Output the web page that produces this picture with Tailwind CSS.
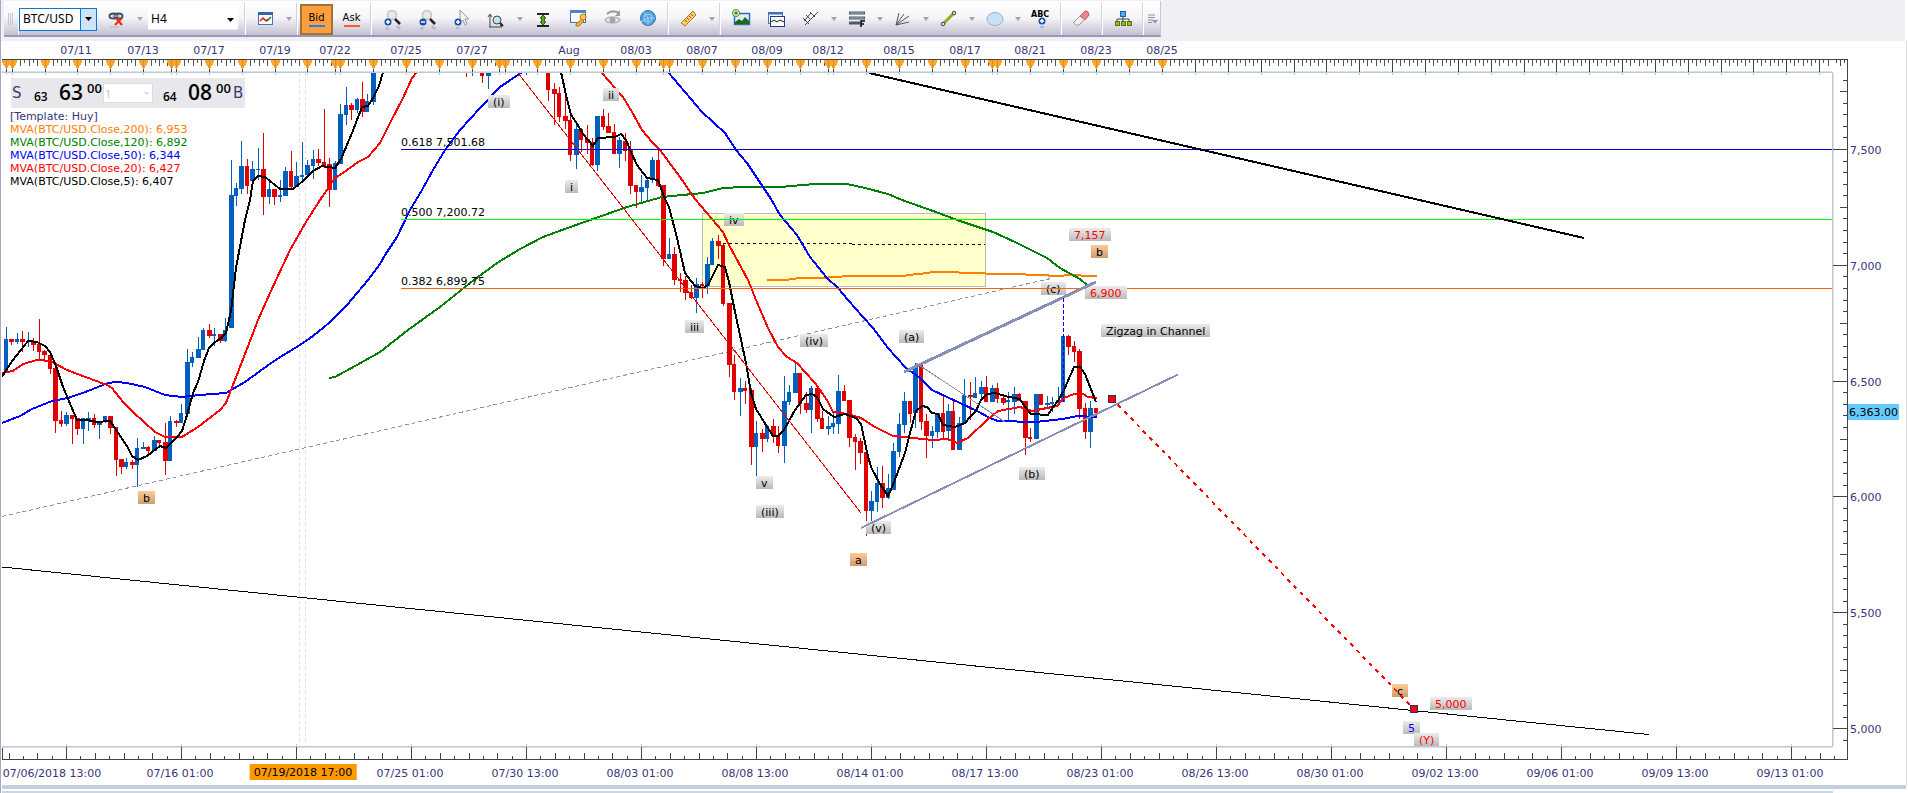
<!DOCTYPE html>
<html lang="en">
<head>
    <meta charset="UTF-8">
    <meta name="viewport" content="width=device-width, initial-scale=1.0">
    <title>BTC/USD H4</title>
    <script src="https://cdn.jsdelivr.net/npm/@tailwindcss/browser@4"></script>
</head>
<body class="h-screen min-h-[400px] flex flex-col overflow-hidden bg-white border-l border-[#a9a7c2] font-['DejaVu_Sans',Verdana,sans-serif] text-[11px] text-[#35357a]">

    <!-- Toolbar -->
    <header class="h-[41px] shrink-0 bg-[#f0eff4] pl-[3px] pt-px mr-[3px]">
        <div id="toolbar" class="w-max h-9 pt-[2px] flex items-center bg-linear-to-b from-white via-[#f5f4f8] to-[#c3c1d2] border-b-2 border-r border-b-[#9a98b2] border-r-[#c9c8d6]">
            <div class="flex gap-px w-[15px] h-full items-center border-r border-white pl-1">
                <i class="w-px h-3 bg-[#c8c8d2]"></i><i class="w-px h-3 bg-[#c8c8d2]"></i><i class="w-px h-3 bg-[#c8c8d2]"></i>
            </div>
            <div class="relative w-[78px] h-[23px]">
                <select aria-label="Symbol" class="appearance-none w-full h-full bg-white border border-[#0a78d7] pl-[3px] text-[12px] leading-none text-black font-['Noto_Sans',sans-serif]"><option>BTC/USD</option></select>
                <span class="absolute right-px top-px bottom-px w-4 bg-[#cce4f7] border-l border-[#0a78d7] flex items-center justify-center pointer-events-none"><svg width="7" height="4"><path d="M0 0h7L3.500 4z" fill="#000"/></svg></span>
            </div>
            <button aria-label="Unlink" class="w-[35px] h-8 ml-[2px] pt-[2px] flex justify-center items-center">
                <svg width="18" height="20" viewBox="0 0 18 20" fill="none"><ellipse cx="5.500" cy="6" rx="4" ry="2.500" stroke="#3a4d63" stroke-width="2"/><ellipse cx="10.500" cy="6" rx="4" ry="2.500" stroke="#3a4d63" stroke-width="2"/><path d="M4 6h8" stroke="#9fb4c8"/><path d="M8 8l6 7M14 8l-7 7" stroke="#f02a10" stroke-width="2"/><path d="M2 17h9" stroke="#c4c6d2" stroke-width="2"/></svg>
            </button>
            <button aria-label="Link options" class="w-[11px] h-8 flex justify-center items-center"><svg width="6" height="4"><path d="M0 0h6L3 4z" fill="#a9a8b8"/></svg></button>
            <div class="relative w-[90px] h-[22px] ml-[3px] mr-1">
                <select aria-label="Period" class="appearance-none w-full h-full bg-white border-b border-[#e6e6ee] pl-[3px] text-[12px] leading-none text-black font-['Noto_Sans',sans-serif]"><option>H4</option></select>
                <svg class="absolute right-1 top-[10px] pointer-events-none" width="7" height="4"><path d="M0 0h7L3.500 4z" fill="#000"/></svg>
            </div>
        </div>
    </header>

    <!-- Chart -->
    <main class="flex-1 min-h-0 ml-px mr-px border-r border-[#dddce6] grid grid-cols-[1fr_74px] grid-rows-[32px_1fr_39px]">
        <div class="relative overflow-hidden">
            <svg class="absolute inset-0 w-full h-full" viewBox="2 41 1830 32" preserveAspectRatio="none" shape-rendering="crispEdges">
                <path d="M2 71.500H1832" stroke="#d9e0e8"/><path d="M2 72.500H1832" stroke="#bccad6"/>
                <g id="topTicks"></g>
                <path d="M2 59.500H1832" stroke="#444"/>
            </svg>
            <div id="topLabels"></div>
        </div>
        <svg class="w-full h-full" viewBox="1832 41 74 32" preserveAspectRatio="none" shape-rendering="crispEdges">
            <path d="M1832 59.500H1848M1836.500 60v3M1840.500 60v6M1844.500 60v3M1847.500 59v14" stroke="#444"/><path d="M1832 72.500h1" stroke="#bccad6"/>
        </svg>

        <div class="relative overflow-hidden">
            <svg id="plot" class="absolute inset-0 w-full h-full" viewBox="2 73 1830 673" preserveAspectRatio="none" shape-rendering="crispEdges" fill="none">
                <rect x="702.500" y="213.500" width="283" height="73" fill="#ffffcc" stroke="#bdbdbd"/>
                <path d="M299.500 73V746M305.500 73V746" stroke="#dedede" stroke-dasharray="3 3"/>
                <g id="gridMarks"></g>
                <path d="M2 516.500L1053 278" stroke="#8890b8" stroke-dasharray="4 3"/>
                <g id="candles"></g>
                <path d="M723 243.500H852M852 244.500H985" stroke="#000" stroke-dasharray="3 3"/>
                <!-- moving averages: 200, 120, 50, 20, 5 -->
                <g stroke-width="2">
                    <path stroke="#ff8000" d="M767 280L785 280 800 278 820 278 837 277 847 276 905 276 907 275 920 274 933 272 958 272 960 273 985 273 987 274 1025 274 1027 275 1047 275 1050 276 1063 276 1065 275 1080 275 1082 276 1097 276"/>
                    <path stroke="#008000" d="M329 378L335 377 357 365 380 352 408 330 440 307 470 283 497 263 520 249 543 237 562 230 593 219 627 207 662 197 703 193 723 188 743 187 780 187 815 184 847 184 865 188 888 194 902 200 933 211 960 221 993 232 1015 242 1047 258 1060 268 1080 279 1087 285"/>
                    <path stroke="#0000ff" d="M2 423L20 416 32 409 52 401 68 398 88 391 108 383 117 382 127 383 145 387 165 395 182 397 200 395 226 393 245 382 267 366 277 359 300 345 313 336 329 323 347 305 368 280 380 264 385 255 397 237 410 210 422 190 433 170 445 150 460 130 480 108 500 87 509 81 522 72"/>
                    <path stroke="#0000ff" d="M668 72L702 112 725 133 736 150 747 163 771 199 780 215 797 235 810 257 827 278 838 288 848 300 863 317 873 328 888 348 905 367 920 378 932 390 947 397 960 403 977 411 990 418 998 421 1035 422 1063 419 1077 416 1097 417"/>
                    <path stroke="#ff0000" d="M2 373L13 371 23 364 37 360 50 361 67 370 107 385 112 388 123 402 133 412 155 432 165 437 182 437 198 427 220 410 226 403 231 390 240 367 258 320 270 293 290 250 306 222 320 200 335 178 343 173 358 162 368 157 380 143 390 123 403 98 412 78 417 72"/>
                    <path stroke="#ff0000" d="M601 72L623 97 632 112 642 130 652 142 660 150 680 177 695 199 723 232 729 245 748 280 756 300 768 328 778 347 787 357 797 363 815 383 827 400 833 412 848 414 861 418 875 427 893 436 913 438 933 440 947 439 957 443 968 438 987 420 998 411 1020 407 1032 411 1057 406 1064 398 1074 394 1083 394 1088 397 1097 398"/>
                    <path stroke="#000" d="M2 377L6 370 13 360 28 341 37 342 45 346 50 352 56 366 63 387 77 420 87 420 97 422 110 421 127 446 132 456 138 460 147 456 160 446 166 448 177 437 182 431 187 415 193 393 198 382 204 361 209 348 215 342 220 339 226 333 231 311 236 268 245 220 250 200 253 181 258 176 265 177 280 189 293 189 303 181 313 171 322 166 335 168 341 159 352 133 362 107 368 106 373 98 379 86 383 72"/>
                    <path stroke="#000" d="M561 72L566 95 571 115 576 122 583 134 593 146 598 138 615 137 621 134 626 140 631 152 637 165 647 178 658 180 665 199 669 207 677 238 685 273 695 286 703 288 708 285 718 265 725 267 729 282 735 312 746 363 751 393 756 409 766 425 773 436 778 436 784 430 795 410 806 395 812 394 817 397 823 409 834 417 845 414 856 418 861 424 867 452 871 467 880 484 888 496 893 485 905 453 910 433 916 411 922 406 927 407 932 413 938 414 943 425 955 427 965 423 970 417 976 411 981 400 987 394 995 393 1009 397 1020 399 1025 407 1031 414 1048 415 1053 407 1058 401 1064 390 1074 367 1080 367 1085 374 1096 402"/>
                </g>
            </svg>
            <div id="notes"></div>
            <svg class="absolute inset-0 w-full h-full pointer-events-none" viewBox="2 73 1830 673" preserveAspectRatio="none" shape-rendering="crispEdges" fill="none">
                <path d="M401 149.500H1832" stroke="#0000d8"/>
                <path d="M401 219.500H1832" stroke="#00ff00"/>
                <path d="M401 288.500H1084M1127 288.500H1832" stroke="#ff6600"/>
                <path d="M518 73L861 513" stroke="#e80000"/>
                <path d="M869 73L1584 238" stroke="#000" stroke-width="2"/>
                <path d="M2 567L1649 734.500" stroke="#000"/>
                <path d="M916 363L1005 422" stroke="#8890b8"/>
                <path d="M904 372L1096 282" stroke="#8890b8" stroke-width="3"/>
                <path d="M861 528L1178 374.500" stroke="#8890b8" stroke-width="2"/>
                <path d="M1063.500 298V402" stroke="#0000ff" stroke-dasharray="4 2"/>
                <path d="M1118 405L1414 709" stroke="#ff0000" stroke-width="2" stroke-dasharray="4 5"/>
                <rect x="1108.500" y="395.500" width="7" height="7" fill="#ff0000" stroke="#2f2f6b"/>
                <rect x="1410.500" y="705.500" width="7" height="7" fill="#ff0000" stroke="#2f2f6b"/>
            </svg>

            <!-- Quote box and indicator legend -->
            <div class="absolute left-[9px] top-[5px] w-[234px] h-[30px] flex items-center bg-[#e8e8ec] text-black font-['Open_Sans','Noto_Sans',sans-serif] font-semibold">
                <span class="w-[23px] pl-px text-[15px] font-normal text-[#3b3b78] font-['DejaVu_Sans',sans-serif]">S</span>
                <span class="w-[25px] text-[12px] pt-2">63</span>
                <span class="w-7 text-[21px]">63</span>
                <span class="w-[15px] text-[13px] pb-2">00</span>
                <span class="relative ml-px w-[50px] h-[20px]">
                    <select aria-label="Amount" class="appearance-none w-full h-full bg-white border border-[#dcdcdc] pl-px text-[11px] leading-none font-normal text-[#c4c4b8]"><option>1</option></select>
                    <svg class="absolute right-1 top-[9px] pointer-events-none" width="5" height="3"><path d="M0 0h5L2.500 3z" fill="#d6d6d6"/></svg>
                </span>
                <span class="w-[25px] ml-[10px] text-[12px] pt-2">64</span>
                <span class="w-7 text-[21px]">08</span>
                <span class="w-[17px] text-[13px] pb-2">00</span>
                <span class="text-[15px] font-normal text-[#3b3b78] font-['DejaVu_Sans',sans-serif]">B</span>
            </div>
            <div class="absolute left-2 top-[37px] leading-[13px] whitespace-nowrap">
                <p>[Template: Huy]</p>
                <p class="text-[#ff8000]">MVA(BTC/USD.Close,200): 6,953</p>
                <p class="text-[#008000]">MVA(BTC/USD.Close,120): 6,892</p>
                <p class="text-[#0000ff]">MVA(BTC/USD.Close,50): 6,344</p>
                <p class="text-[#ff0000]">MVA(BTC/USD.Close,20): 6,427</p>
                <p class="text-black">MVA(BTC/USD.Close,5): 6,407</p>
            </div>
        </div>

        <!-- Price axis -->
        <div class="relative">
            <svg class="absolute inset-0 w-full h-full" viewBox="1832 73 74 673" preserveAspectRatio="none" shape-rendering="crispEdges">
                <path d="M1832.500 73V746" stroke="#bccad6"/><path d="M1833.500 73V746" stroke="#d9e0e8"/>
                <g id="priceTicks"></g>
                <path d="M1847.500 73V746" stroke="#444"/>
            </svg>
            <div id="priceLabels"></div>
        </div>

        <!-- Time axis -->
        <div class="relative overflow-hidden">
            <svg class="absolute inset-0 w-full h-full" viewBox="2 746 1830 39" preserveAspectRatio="none" shape-rendering="crispEdges">
                <path d="M2 746.500H1832" stroke="#bccad6"/><path d="M2 747.500H1832" stroke="#d9e0e8"/>
                <g id="timeTicks"></g>
                <path d="M2 759.500H1832" stroke="#444"/>
            </svg>
            <div id="timeLabels"></div>
        </div>
        <svg class="w-full h-full" viewBox="1832 746 74 39" preserveAspectRatio="none" shape-rendering="crispEdges">
            <path d="M1832 759.500h16M1847.500 746v14M1834.500 756v3" stroke="#444"/><path d="M1832 746.500h1" stroke="#bccad6"/>
        </svg>
    </main>

    <footer class="h-2 shrink-0 ml-px mr-[2px]">
        <div class="h-1 bg-[#c3cfde]"></div>
        <div class="h-4 mt-[2px] mr-[73px] border-t-2 border-[#cdd6e0]"></div>
    </footer>

    <script>
        const PLOT = { x: 2, y: 73, w: 1830, h: 673 };
        const $ = id => document.getElementById(id);
        const pctX = x => ((x - PLOT.x) / PLOT.w * 100) + '%';
        const pctY = y => ((y - PLOT.y) / PLOT.h * 100) + '%';

        // ---- toolbar ----
        const blob = (x, y) => `<circle cx="${x}" cy="${y}" r="3.500" fill="#1452a8"/><path d="M${x - 2} ${y}h4" stroke="#fff" stroke-width="1.500"/>`;
        const plus = (x, y) => blob(x, y) + `<path d="M${x} ${y - 2}v4" stroke="#fff" stroke-width="1.500"/>`;
        const lens = '<circle cx="11" cy="6" r="4.500" fill="#e9e9ec" stroke="#c2c2c6" stroke-width="1.500"/><path d="M14 10l5 5" stroke="#222" stroke-width="2.500"/><path d="M6 18v3M16 17l3 3" stroke="#b9b8cc" stroke-width="3"/>';
        const ICONS = {
            chart: '<rect x="3.500" y="3.500" width="14" height="12" fill="#fff" stroke="#4a72b0"/><path d="M3 4.500h15" stroke="#3465b0" stroke-width="3"/><path d="M5 12l3-3 3 3 2-2" stroke="#e01010" stroke-width="1.500"/><path d="M12 12l4-4" stroke="#108010" stroke-width="1.500"/><path d="M4 19h13" stroke="#d0cfdd" stroke-width="2"/>',
            zoomIn: lens + plus(7, 13),
            zoomOut: lens + blob(7, 13),
            pointer: '<path d="M9 1v13l3-3 2 5 2-1-2-5h4z" fill="#f2f2f2" stroke="#999"/>' + plus(7, 13) + '<path d="M5 19h4" stroke="#b9b8cc" stroke-width="2"/>',
            area: '<path d="M4 6v12M2 8l2-3 2 3M3 18h13l-2-2" stroke="#444"/><circle cx="11" cy="11" r="4" fill="#bfe6f7" stroke="#444"/><path d="M14 14l3 3" stroke="#222" stroke-width="2"/>',
            fit: '<path d="M5 5h12M5 17h12" stroke="#222" stroke-width="2"/><path d="M11 6l3 3h-1.500v4H14l-3 3-3-3h1.500V9H8z" fill="#5aa22c" stroke="#2c6410"/>',
            options: '<rect x="3.500" y="1.500" width="15" height="12" fill="#fff" stroke="#3f72bd"/><path d="M3 2.500h16" stroke="#4f83cc" stroke-width="3"/><path d="M15 10l-6 5v2h3l5-5z" fill="#f0b030" stroke="#b87818"/><circle cx="16" cy="8" r="3" fill="#ffc850" stroke="#b87818"/>',
            eye: '<path d="M3 11c3-4 12-4 15 0-3 4-12 4-15 0z" stroke="#b4b4bc" stroke-width="1.500"/><circle cx="10.500" cy="11" r="3" fill="#a4a4ac"/><path d="M5 5c4-4 8-3 12-1" stroke="#9a9aa2" stroke-width="2"/><path d="M18 1v6h-5z" fill="#9a9aa2"/>',
            radar: '<circle cx="11" cy="9" r="7.500" fill="#4fa2dc" stroke="#2f77b4"/><path d="M11 9L6 2M11 9h7M11 9v7M11 9L4 13" stroke="#a9d4f2"/><circle cx="11" cy="9" r="4" stroke="#a9d4f2"/>',
            ruler: '<path d="M3 14L15 2l3 4L7 17z" fill="#f8cf70" stroke="#b07818"/><path d="M7 11l2 2M9 9l2 2M11 7l2 2M13 5l2 2" stroke="#8a5a10"/>',
            image: '<rect x="4.500" y="4.500" width="15" height="11" fill="#dff0fc" stroke="#2f6cc0" stroke-width="1.500"/><path d="M5 15v-2l4-3 3 2 3-4 4 4v3z" fill="#1c6a14"/><circle cx="6" cy="4" r="3.500" fill="#e4f4cc" stroke="#4c8a1c"/><path d="M4 4h4M6 2v4" stroke="#2c6a0c"/>',
            windows: '<rect x="3.500" y="3.500" width="14" height="11" fill="#fff" stroke="#3f72bd"/><path d="M3 4.500h15" stroke="#3f72bd" stroke-width="2"/><rect x="5.500" y="7.500" width="14" height="10" fill="#fff" stroke="#20407a"/><path d="M6 13l3-2 3 2 3-2 4 2" stroke="#222"/>',
            fork: '<path d="M5 16L18 3M6 6l5 5M10 3l5 5M3 9l6 6M4 12l7-8" stroke="#444"/>',
            fib: '<path d="M3 4h16M3 9h16M3 14h11" stroke="#4e5a66" stroke-width="3"/><path d="M4 4h14M4 9h14" stroke="#a9b4be"/><path d="M15 18v-6h4M15 15h3" stroke="#000" stroke-width="1.500"/>',
            fan: '<path d="M4 16L7 4M4 16l8-11M4 16l13-9M4 16l13-3" stroke="#555"/>',
            line: '<path d="M5 15L16 4" stroke="#86b414" stroke-width="3"/><circle cx="5" cy="15" r="1.800" fill="#d8e8a0" stroke="#445"/><circle cx="16" cy="4" r="1.800" fill="#d8e8a0" stroke="#445"/>',
            ellipse: '<ellipse cx="11" cy="10" rx="8" ry="6.500" fill="#c9e0f5" stroke="#8fb2d6"/>',
            text: '<text x="1" y="8" font-size="8" font-weight="bold" fill="#000">ABC</text>' + plus(12, 12) + '<path d="M10 18h4" stroke="#a8b8e0" stroke-width="2"/>',
            eraser: '<path d="M3 13L14 2q4 0 4 4L8 16q-5 1-5-3z" fill="#f0f0f0" stroke="#999"/><path d="M9 7l5-5q4 0 4 4l-4 5z" fill="#ea8590" stroke="#c8606c"/>',
            tree: '<path d="M11 7v6M5 13v-3h12v3" stroke="#444"/><rect x="8.500" y="2.500" width="5" height="5" fill="#58a8f0" stroke="#1c60b0"/><g fill="#94bc1c" stroke="#567808"><rect x="3.500" y="12.500" width="4" height="4"/><rect x="9.500" y="12.500" width="4" height="4"/><rect x="15.500" y="12.500" width="4" height="4"/></g>'
        };
        const icon = (name, label) => `<button aria-label="${label}" class="w-[35px] h-8 pt-[2px] flex justify-center items-center"><svg width="22" height="22" viewBox="0 0 22 22" fill="none">${ICONS[name]}</svg></button>`;
        const arrow = '<button aria-label="More" class="w-[11px] h-8 flex justify-center items-center"><svg width="6" height="4"><path d="M0 0h6L3 4z" fill="#a3a2b4"/></svg></button>';
        const sep = '<i class="w-1.5 h-8 flex justify-center"><i class="w-[2px] h-full bg-[#d3d2de] border-r border-white"></i></i>';
        $('toolbar').insertAdjacentHTML('beforeend', [
            sep, icon('chart', 'Chart type'), arrow, sep,
            '<button class="w-[33px] h-[31px] bg-[#ff9f3c] border-2 border-[#9c7434] text-black text-[10px] leading-[12px]">Bid<i class="block mx-auto mt-px w-4 h-[2px] bg-[#1c80ff]"></i></button>',
            '<button class="w-[33px] h-[31px] ml-[2px] text-black text-[10px] leading-[12px]">Ask<i class="block mx-auto mt-px w-4 h-[2px] bg-[#ff5a28]"></i></button>',
            sep, icon('zoomIn', 'Zoom in'), icon('zoomOut', 'Zoom out'), icon('pointer', 'Pointer'), icon('area', 'Zoom area'), arrow,
            icon('fit', 'Fit'), icon('options', 'Options'), icon('eye', 'Show'), icon('radar', 'Radar'),
            sep, icon('ruler', 'Ruler'), arrow,
            sep, icon('image', 'Add image'), icon('windows', 'Windows'), icon('fork', 'Pitchfork'), arrow, icon('fib', 'Fibonacci'), arrow,
            icon('fan', 'Fan'), arrow, icon('line', 'Line'), arrow, icon('ellipse', 'Ellipse'), arrow, icon('text', 'Text'),
            sep, icon('eraser', 'Eraser'), sep, icon('tree', 'Objects'), sep,
            '<button aria-label="Toolbar options" class="w-[14px] h-8 flex justify-center items-center"><svg width="10" height="10" viewBox="0 0 10 10"><path d="M0 1h7M0 3.500h7M0 6h5M0 8.500h4" stroke="#8f8ea4"/><path d="M4 6h6L7 9.500z" fill="#8f8ea4"/></svg></button>'
        ].join(''));

        // ---- candles: colour, high, top of body, bottom of body, low ----
        const BARS = {
            0: `B327,339,372,372 R339,339,342,345 B333,339,342,344 R331,339,342,352 B332,341,342,347 R338,342,345,351 R319,344,352,360 R350,351,355,360 R352,355,369,374 R368,368,421,433
                R411,420,424,427 B412,415,424,426 R415,415,419,444 R418,418,429,435 B418,418,429,444 B412,418,420,431 R414,418,425,428 B421,422,425,439 B416,416,422,423 R416,416,428,434
                R427,427,460,476 R459,459,467,474 B458,462,467,469 R460,462,465,469 B438,448,465,487 B442,447,449,449 R446,447,451,454 B436,440,451,451 R440,440,443,448 R423,442,461,475
                B416,421,461,461 R420,421,423,427 B404,413,423,423 B349,362,414,414 B352,357,363,367 B337,349,358,358 B328,330,350,350 R324,330,336,338 B328,334,336,346 R334,334,341,343
                B318,330,341,342 B160,195,328,328 B183,188,196,206 B141,166,189,194 R159,166,186,194 B161,169,181,190 B148,169,170,180 R133,169,197,215 B180,189,197,204 R189,189,197,205
                B180,195,197,202 B167,171,196,196 R151,171,187,188 B162,176,187,187 B142,175,177,181 B160,165,175,176 B150,159,166,179 R149,159,163,166 R109,162,166,168 R158,164,190,207
                B161,163,190,190 B104,114,164,164 B87,105,115,125 R103,105,110,120 B98,99,110,113 R82,99,112,117 B94,101,112,112 B60,60,102,105`,
            84: 'R60,60,61,77 B60,60,61,76',
            87: 'R60,60,76,83 B60,60,76,89',
            95: 'B60,60,61,75',
            99: `R60,60,90,101 R83,89,94,125 R87,93,117,122 R96,116,121,129 R115,120,155,161 B122,129,155,169 R128,129,140,152 R125,139,143,154 R138,142,165,166 B116,116,165,171
                R109,116,127,130 R113,126,133,133 R124,132,154,154 B137,140,154,168 R133,141,151,161 R141,149,186,194 R185,185,192,208 B175,187,192,202 B178,180,188,202 B157,160,180,183
                R149,160,186,187 R185,185,259,266 B238,254,259,259 R247,254,280,285 R273,279,281,292 R276,280,293,300 R285,292,298,299 B278,284,298,313 R282,284,286,298 B257,264,286,294
                B238,241,265,265 R235,241,246,259 R244,245,304,306 R303,303,365,377 R355,364,392,400 B378,388,392,416 R381,388,391,404 R388,390,447,465 B421,433,447,476 R429,433,439,452
                B425,426,439,442 R419,426,436,443 R426,435,446,453 B376,401,446,463 B385,392,402,405 B362,373,393,393 R373,373,404,414 R392,403,410,413 B386,388,410,433 R388,388,419,422
                R411,418,429,429 B416,426,429,435 B413,423,427,434 B375,391,424,434 R385,391,401,401 R400,400,438,447 R434,437,442,470 R438,441,453,464 R452,452,511,536 B491,501,511,521
                B467,483,502,512 R466,483,498,508 B474,488,498,499 B443,451,490,490 B413,424,452,457 B392,401,425,433 R401,401,414,423 B363,366,413,428 R364,365,422,430 R414,421,436,458
                B426,431,436,448 B413,413,432,438 R396,413,432,440 B404,411,431,440 R400,411,450,450 B417,423,450,450 B379,395,424,424 R382,395,397,420 B377,393,398,398 B381,387,394,399
                R376,387,402,402 B385,388,402,402 R383,388,399,403 R396,398,403,405 B392,400,402,420 B387,394,402,414 R393,394,401,401 R401,401,438,455 R428,437,439,442 B394,394,439,439
                R394,394,405,405 B396,403,405,407 B397,402,404,412 B387,400,403,403 B336,336,402,402 R335,336,347,355 R341,346,352,362 R349,351,409,419 R403,408,432,439 B401,408,432,448
                R408,408,413,418`
        };
        let html = '';
        for (const start in BARS) {
            BARS[start].trim().split(/\s+/).forEach((bar, n) => {
                const [hi, top, bot, lo] = bar.slice(1).split(',').map(Number);
                const x = Math.round(6 + 5.4767 * (Number(start) + n));
                const fill = bar[0] === 'B' ? '#0060c0' : '#e00000';
                html += `<path fill="${fill}" d="M${x} ${hi}h1V${lo}h-1zM${x - 2} ${top}h${4 + (n % 2)}V${bot}h-${4 + (n % 2)}z"/>`;
            });
        }
        $('candles').innerHTML = html;

        // ---- wave labels ----
        const GREY = 'absolute h-[13px] px-[5px] leading-[15px] whitespace-nowrap bg-linear-to-b from-[#ececec] to-[#bababa] ';
        const PEACH = 'absolute h-[13px] px-[5px] leading-[15px] whitespace-nowrap bg-linear-to-b from-[#ffcc99] to-[#cc9f70] text-black';
        const PLAIN = 'absolute leading-[13px] whitespace-nowrap text-black';
        const black = GREY + 'text-black', red = GREY + 'text-[#ff0000]', blue = GREY + 'text-[#0000ff]';
        $('notes').innerHTML = [
            ['(i)', 488, 95, black], ['ii', 603, 88, black], ['i', 565, 180, black], ['iv', 724, 213, black],
            ['iii', 685, 320, black], ['v', 756, 476, black], ['(iii)', 756, 505, black], ['(iv)', 800, 334, black],
            ['(a)', 899, 330, black], ['(v)', 866, 521, black], ['(b)', 1019, 467, black], ['(c)', 1041, 282, black],
            ['Zigzag in Channel', 1101, 324, black], ['7,157', 1069, 228, red], ['6,900', 1085, 286, red], ['5,000', 1430, 697, red],
            ['a', 850, 553, PEACH], ['b', 1091, 245, PEACH], ['b', 138, 491, PEACH], ['c', 1392, 684, PEACH],
            ['5', 1403, 721, blue], ['(Y)', 1414, 733, red],
            ['0.618 7,501.68', 401, 136, PLAIN], ['0.500 7,200.72', 401, 206, PLAIN], ['0.382 6,899.75', 401, 275, PLAIN]
        ].map(([text, x, y, cls]) => `<span class="${cls}" style="left:${pctX(x)};top:${pctY(y)}">${text}</span>`).join('');

        // ---- top axis ----
        const DAYS = [6, 12, 45, 77, 110, 143, 171, 176, 209, 242, 275, 307, 335, 340, 373, 406, 439, 472, 499, 505, 537, 570, 603, 636, 663, 669, 702, 735, 767, 800, 828, 833, 866, 899, 932, 965, 992, 997, 1030, 1063, 1096, 1129, 1162];
        const AHEAD = Array.from({ length: 20 }, (_, i) => Math.round(1195 + 32.85 * i));
        const all = [...DAYS, ...AHEAD];
        let ticks = '', marks = '';
        all.forEach((x, i) => {
            ticks += `<path d="M${x + .5} 60v12" stroke="#444"/>`;
            if (i < DAYS.length) ticks += `<path d="M${x - 4} 60h9v2l-4 7h-1l-4-7z" fill="#ffa52c"/><path d="M${x + .5} 60v8" stroke="#e08c18"/>`;
            marks += `<path d="M${x + .5} 73v2" stroke="#bccad6"/>`;
            const gap = (all[i + 1] || 1832) - x, n = Math.round(gap / 4.11);
            for (let k = 1; k < n; k++) ticks = `<path d="M${Math.round(x + gap * k / n) + .5} 60v${k % 2 ? 3 : 6}" stroke="#555"/>` + ticks;
        });
        $('topTicks').innerHTML = ticks;
        $('topLabels').innerHTML = [
            ['07/11', 76], ['07/13', 143], ['07/17', 209], ['07/19', 275], ['07/22', 335], ['07/25', 406], ['07/27', 472], ['Aug', 569], ['08/03', 636],
            ['08/07', 702], ['08/09', 767], ['08/12', 828], ['08/15', 899], ['08/17', 965], ['08/21', 1030], ['08/23', 1096], ['08/25', 1162]
        ].map(([text, x]) => `<span class="absolute top-[3px] leading-[14px] -translate-x-1/2" style="left:${pctX(x)}">${text}</span>`).join('');

        // ---- time axis ----
        ticks = '<path d="M2.500 748v11" stroke="#444"/>';
        for (let k = -4; k <= 123; k++) {
            const x = Math.round(66 + 14.375 * k) + .5;
            const len = k % 8 === 0 ? 12 : k % 2 === 0 ? 6 : 3;
            ticks += `<path d="M${x} ${759 - len}V759" stroke="#444"/>`;
            if (k % 8 === 0) marks += `<path d="M${x} 744v2" stroke="#bccad6"/>`;
        }
        $('timeTicks').innerHTML = ticks;
        $('gridMarks').innerHTML = marks;
        const TIME = 'absolute top-[21px] leading-[14px] whitespace-nowrap -translate-x-1/2';
        const TAG = 'absolute top-[18px] h-4 px-1 leading-[17px] whitespace-nowrap -translate-x-1/2 bg-[#ff9900] text-black';
        $('timeLabels').innerHTML = [
            ['07/06/2018 13:00', 52], ['07/16 01:00', 180], ['07/19/2018 17:00', 303], ['07/25 01:00', 410], ['07/30 13:00', 525], ['08/03 01:00', 640],
            ['08/08 13:00', 755], ['08/14 01:00', 870], ['08/17 13:00', 985], ['08/23 01:00', 1100], ['08/26 13:00', 1215], ['08/30 01:00', 1330],
            ['09/02 13:00', 1445], ['09/06 01:00', 1560], ['09/09 13:00', 1675], ['09/13 01:00', 1790]
        ].map(([text, x]) => `<span class="${x === 303 ? TAG : TIME}" style="left:${pctX(x)}">${text}</span>`).join('');

        // ---- price axis, 50 points a tick ----
        ticks = '';
        for (let k = -6; k <= 51; k++) {
            const y = Math.round(149 + 11.583 * k) + .5;
            const from = k % 10 === 0 ? 1833 : k % 5 === 0 ? 1840 : 1843;
            ticks += `<path d="M${from} ${y}H1847" stroke="#444"/>`;
        }
        $('priceTicks').innerHTML = ticks;
        $('priceLabels').innerHTML = [['7,500', 151], ['7,000', 267], ['6,500', 383], ['6,000', 498], ['5,500', 614], ['5,000', 730]]
            .map(([text, y]) => `<span class="absolute left-[18px] leading-[14px] -translate-y-1/2" style="top:${pctY(y)}">${text}</span>`).join('')
            + `<span class="absolute left-4 h-4 px-px leading-[17px] -translate-y-1/2 bg-[#66ccff] text-black" style="top:${pctY(412)}">6,363.00</span>`;
    </script>
</body>
</html>
